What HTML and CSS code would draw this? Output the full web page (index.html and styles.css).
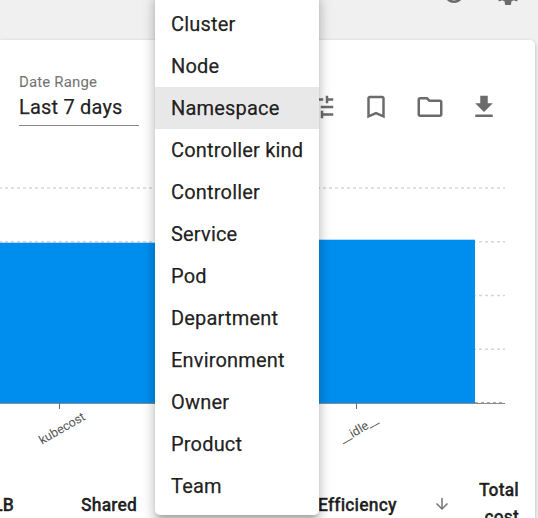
FILE: index.html
```
<!DOCTYPE html>
<html lang="en">
<head>
<meta charset="utf-8">
<title>Cost allocation</title>
<link rel="stylesheet" href="styles.css">
</head>
<body>
<div class="topbar">
  <svg class="icon" viewBox="0 0 24 24"><path d="M17.65 6.35C16.2 4.9 14.21 4 12 4c-4.42 0-7.99 3.58-7.99 8s3.57 8 7.99 8c3.73 0 6.84-2.55 7.73-6h-2.08c-.82 2.33-3.04 4-5.65 4-3.31 0-6-2.69-6-6s2.69-6 6-6c1.66 0 3.14.69 4.22 1.78L13 11h7V4l-2.35 2.35z"/></svg>
  <svg class="icon" viewBox="0 0 24 24"><path d="M19.14 12.94c.04-.3.06-.61.06-.94 0-.32-.02-.64-.07-.94l2.03-1.58c.18-.14.23-.41.12-.61l-1.92-3.32c-.12-.22-.37-.29-.59-.22l-2.39.96c-.5-.38-1.03-.7-1.62-.94l-.36-2.54c-.04-.24-.24-.41-.48-.41h-3.84c-.24 0-.43.17-.47.41l-.36 2.54c-.59.24-1.13.57-1.62.94l-2.39-.96c-.22-.08-.47 0-.59.22L2.74 8.87c-.12.21-.08.47.12.61l2.03 1.58c-.05.3-.09.63-.09.94s.02.64.07.94l-2.03 1.58c-.18.14-.23.41-.12.61l1.92 3.32c.12.22.37.29.59.22l2.39-.96c.5.38 1.03.7 1.62.94l.36 2.54c.05.24.24.41.48.41h3.84c.24 0 .44-.17.47-.41l.36-2.54c.59-.24 1.13-.56 1.62-.94l2.39.96c.22.08.47 0 .59-.22l1.92-3.32c.12-.22.07-.47-.12-.61l-2.01-1.58zM12 15.6c-1.98 0-3.6-1.62-3.6-3.6s1.62-3.6 3.6-3.6 3.6 1.62 3.6 3.6-1.62 3.6-3.6 3.6z"/></svg>
</div>
<main class="card">
  <div class="toolbar">
    <div class="field">
      <div class="field-label">Date Range</div>
      <div class="field-value">Last 7 days</div>
    </div>
    <div class="actions">
      <svg class="icon" viewBox="0 0 24 24"><path d="M3 17v2h6v-2H3zM3 5v2h10V5H3zm10 16v-2h8v-2h-8v-2h-2v6h2zM7 9v2H3v2h4v2h2V9H7zm14 4v-2H11v2h10zm-6-4h2V7h4V5h-4V3h-2v6z"/></svg>
      <svg class="icon" viewBox="0 0 24 24"><path d="M17 3H7c-1.100 0-1.990.9-1.990 2L5 21l7-3 7 3V5c0-1.100-.9-2-2-2zm0 15l-5-2.180L7 18V5h10v13z"/></svg>
      <svg class="icon" viewBox="0 0 24 24"><path d="M9.170 6l2 2H20v10H4V6h5.170M10 4H4c-1.100 0-1.990.9-1.990 2L2 18c0 1.100.9 2 2 2h16c1.100 0 2-.9 2-2V8c0-1.100-.9-2-2-2h-8l-2-2z"/></svg>
      <svg class="icon" viewBox="0 0 24 24"><path d="M19 9h-4V3H9v6H5l7 7 7-7zM5 18v2h14v-2H5z"/></svg>
    </div>
  </div>
  <svg class="chart" viewBox="0 130 535 330">
    <g class="grid">
      <path d="M-1 188H505M-1 241.800H505M-1 295.500H505M-1 349.200H505"/>
    </g>
    <rect class="bar" x="0" y="242.700" width="178" height="161"/>
    <rect class="bar" x="237" y="239.700" width="238" height="163.800"/>
    <path class="axis" d="M0 403.500H505"/>
    <path class="axis-edge" d="M475 402.500H505"/>
    <path class="tick" d="M59.500 403.500V409M356.500 403.500V409"/>
    <text class="tick-label" transform="translate(62 428.500) rotate(-30)" text-anchor="middle" dy="4">kubecost</text>
    <text class="tick-label" transform="translate(359 429.500) rotate(-30)" text-anchor="middle" dy="4">__idle__</text>
  </svg>
  <div class="table-head">
    <div class="col-lb">LB</div>
    <div class="col-shared">Shared</div>
    <div class="col-efficiency">Efficiency</div>
    <svg class="sort" viewBox="0 0 24 24"><path d="M20 12l-1.410-1.410L13 16.170V4h-2v12.170l-5.580-5.590L4 12l8 8 8-8z"/></svg>
    <div class="col-total">Total<br>cost</div>
  </div>
</main>
<ul class="menu">
  <li>Cluster</li>
  <li>Node</li>
  <li class="selected">Namespace</li>
  <li>Controller kind</li>
  <li>Controller</li>
  <li>Service</li>
  <li>Pod</li>
  <li>Department</li>
  <li>Environment</li>
  <li>Owner</li>
  <li>Product</li>
  <li>Team</li>
</ul>
</body>
</html>
```
FILE: styles.css
```
* { box-sizing: border-box; }
html, body { height: 518px; overflow: hidden; }
body {
  margin: 0;
  position: relative;
  background: #f0f0f0;
  color: rgba(0, 0, 0, 0.87);
  font-family: Roboto, sans-serif;
}
.icon { width: 30px; height: 30px; flex: none; fill: #6b6b6b; }
.topbar {
  height: 40px;
  display: flex;
  justify-content: flex-end;
  gap: 24px;
  padding-right: 15px;
}
.topbar .icon { margin-top: -22px; }
.card {
  width: 535px;
  height: 478px;
  background: #fff;
  border-top-right-radius: 5px;
  box-shadow: 0 2px 4px -1px rgba(0, 0, 0, 0.2), 0 1px 4px rgba(0, 0, 0, 0.14);
  overflow: hidden;
}
.toolbar {
  height: 90px;
  display: flex;
  justify-content: space-between;
  padding: 33px 36px 0 19px;
}
.field { width: 120px; height: 53px; border-bottom: 1px solid #888; }
.field-label {
  color: rgba(0, 0, 0, 0.54);
  font-size: 15px;
  line-height: 18px;
  letter-spacing: 0.14px;
  -webkit-text-stroke: 0.15px;
}
.field-value {
  font-size: 20px;
  line-height: 24px;
  letter-spacing: 0.19px;
  margin-top: 4px;
  -webkit-text-stroke: 0.25px;
}
.actions { display: flex; gap: 24px; padding-top: 19px; }
.chart { display: block; width: 535px; height: 330px; }
.grid { stroke: #d6d6d6; stroke-width: 1.400; stroke-dasharray: 3 3; fill: none; }
.bar { fill: #008eee; }
.axis { stroke: #8c8c8c; stroke-width: 1; fill: none; }
.axis-edge { stroke: #a8a8a8; stroke-width: 1; stroke-dasharray: 3 3; fill: none; }
.tick { stroke: #666; stroke-width: 1; fill: none; }
.tick-label { font-size: 12.500px; fill: #555; }
.table-head {
  height: 90px;
  display: flex;
  align-items: center;
  font-size: 17.500px;
  font-weight: 500;
  line-height: 27px;
  letter-spacing: 0.18px;
  -webkit-text-stroke: 0.3px;
}
.col-lb { width: 14px; margin-right: 67px; display: flex; justify-content: flex-end; }
.col-shared { width: 237px; }
.col-efficiency { width: 115px; }
.sort { width: 18px; height: 18px; fill: #757575; flex: none; margin-top: -2px; }
.col-total { width: 68px; text-align: right; margin-top: -3px; }
.menu {
  position: absolute;
  left: 155px;
  top: -8px;
  width: 164px;
  height: 523px;
  margin: 0;
  padding: 11px 0 0;
  list-style: none;
  background: #fff;
  border-radius: 5px;
  box-shadow: 0 5px 5px -3px rgba(0, 0, 0, 0.2), 0 8px 10px 1px rgba(0, 0, 0, 0.14), 0 3px 14px 2px rgba(0, 0, 0, 0.12);
}
.menu li {
  height: 42px;
  padding: 0 16px;
  font-size: 20px;
  line-height: 42px;
  letter-spacing: 0.19px;
  white-space: nowrap;
  -webkit-text-stroke: 0.25px;
}
.menu .selected { background: #e8e8e8; }
```
